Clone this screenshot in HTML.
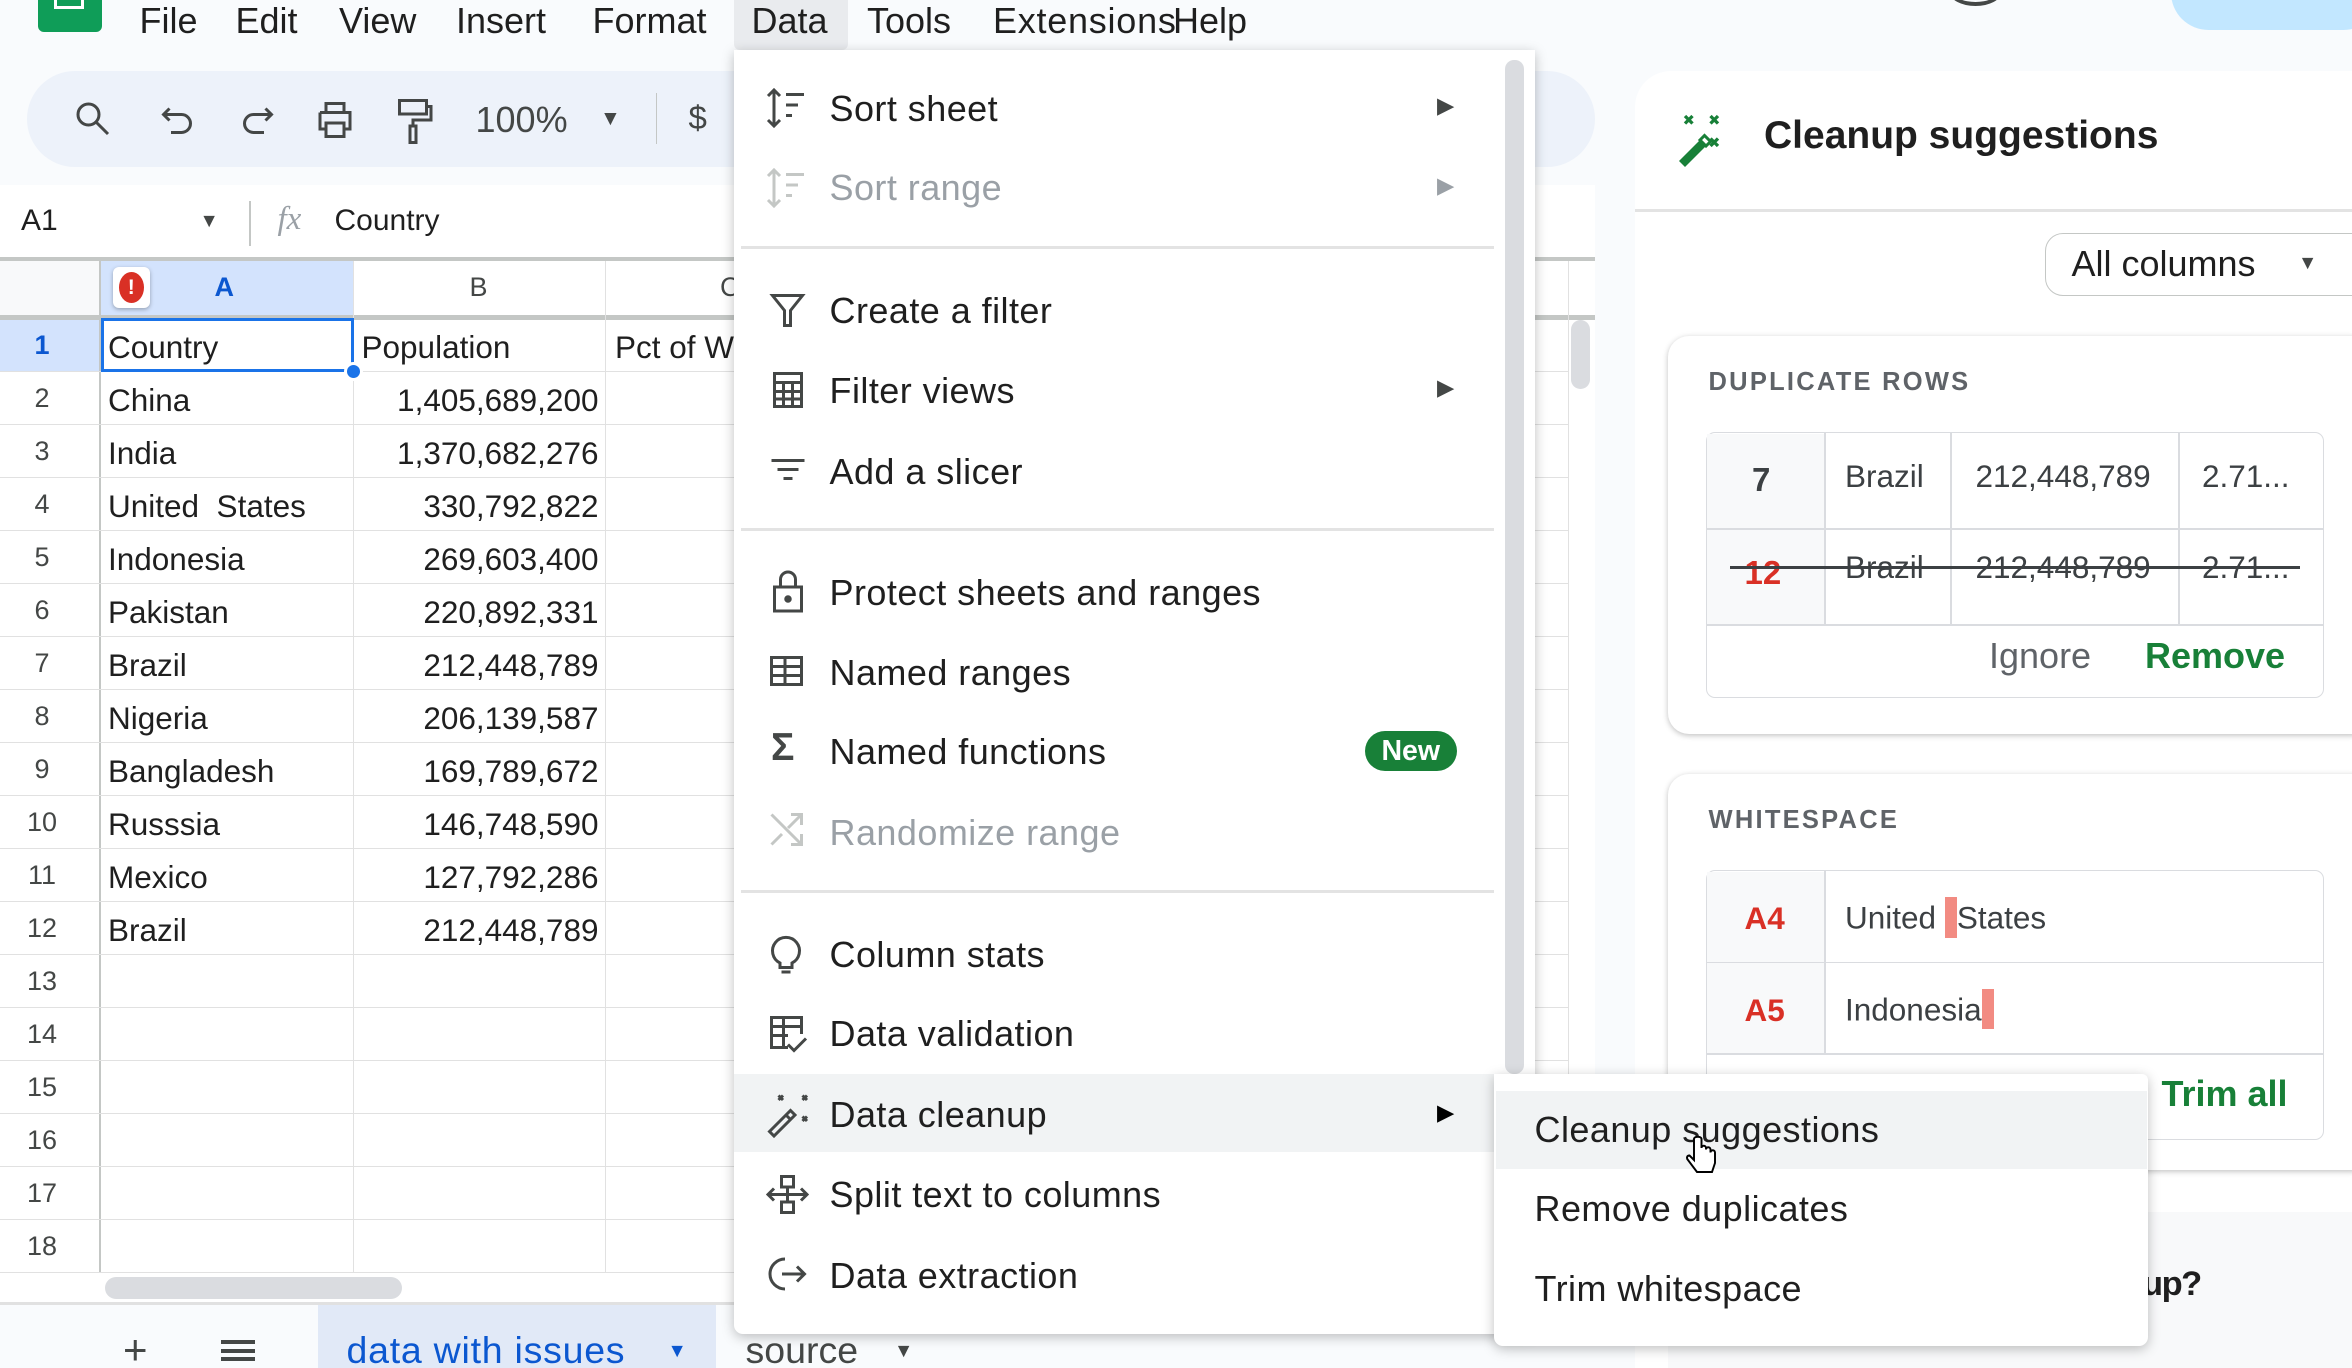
<!DOCTYPE html>
<html><head><meta charset="utf-8"><style>
*{box-sizing:border-box;margin:0;padding:0}
html,body{width:2352px;height:1368px;overflow:hidden;background:#f9fbfd}
#w{zoom:1.5;width:1568px;height:912px;position:relative;font-family:"Liberation Sans",Arial,sans-serif;color:#1f1f1f;background:#f9fbfd;overflow:hidden}
.a{position:absolute}
.mi{position:absolute;top:0;font-size:24px;line-height:28px}
.ic{position:absolute;stroke:#444746;fill:none;stroke-width:2}
.cell{position:absolute;font-size:21px;line-height:35px;white-space:nowrap}
.rn{position:absolute;left:0;width:56px;text-align:center;font-size:18px;color:#444746}
.m{position:absolute;left:553px;font-size:24px;letter-spacing:.3px;line-height:30px;color:#1f1f1f;white-space:nowrap}
.dis{color:#9aa0a6}
.arr{position:absolute;left:958px;font-size:15px;color:#444746}
.sm{position:absolute;left:1023px;font-size:24px;letter-spacing:.3px;color:#1f1f1f;white-space:nowrap}
.hd{font-size:17px;font-weight:bold;letter-spacing:1.5px;color:#5f6368}
.tc{position:absolute;font-size:21px;color:#3c4043;white-space:nowrap}
</style></head><body><div id="w">

<div class="a" style="left:25px;top:-10px;width:43px;height:31px;background:#0f9d58;border-radius:4px"></div>
<div class="a" style="left:36px;top:-4px;width:20px;height:10px;border:2px solid #fff;border-top:none"></div>
<div class="a" style="left:489px;top:0;width:76px;height:33px;background:#e9ebee;border-radius:0 0 4px 4px"></div>
<div class="mi" style="left:93px">File</div><div class="mi" style="left:157px">Edit</div><div class="mi" style="left:226px">View</div><div class="mi" style="left:304px">Insert</div><div class="mi" style="left:395px">Format</div><div class="mi" style="left:501px">Data</div><div class="mi" style="left:578px">Tools</div><div class="mi" style="left:662px;letter-spacing:.5px">Extensions</div><div class="mi" style="left:782px">Help</div>
<div class="a" style="left:1300px;top:-14px;width:34px;height:18px;border:3px solid #444746;border-radius:50%"></div>
<div class="a" style="left:1447px;top:-30px;width:140px;height:50px;background:#c2e7ff;border-radius:25px"></div>

<div class="a" style="left:18px;top:47px;width:1045px;height:64px;background:#edf2fa;border-radius:32px"></div>
<svg class="ic" style="left:48px;top:65px" width="28" height="28" viewBox="0 0 28 28"><circle cx="11" cy="11" r="7"/><path d="M16 16l8 8"/></svg>
<svg class="ic" style="left:106px;top:67px" width="26" height="26" viewBox="0 0 26 26"><path d="M7 5L3 9l4 4M3 9h12a6 6 0 010 12H8"/></svg>
<svg class="ic" style="left:158px;top:67px" width="26" height="26" viewBox="0 0 26 26"><path d="M19 5l4 4-4 4M23 9H11a6 6 0 000 12h7"/></svg>
<svg class="ic" style="left:209px;top:66px" width="28" height="28" viewBox="0 0 28 28"><path d="M8 9V3h12v6M4 9h20v11h-4M8 20H4V9M8 16h12v9H8z"/></svg>
<svg class="ic" style="left:263px;top:64px" width="26" height="32" viewBox="0 0 26 32"><path d="M3 3h18v9H3zM21 7h3v9H12v4M10 20h4v11h-4z"/></svg>
<div class="a" style="left:317px;top:66px;font-size:24px;color:#444746">100%</div>
<div class="a" style="left:400px;top:71px;font-size:14px;color:#444746">▼</div>
<div class="a" style="left:437px;top:62px;width:1px;height:34px;background:#c4c7c5"></div>
<div class="a" style="left:459px;top:66px;font-size:22px;color:#444746">$</div>

<div class="a" style="left:0;top:123px;width:1063px;height:48px;background:#fff"></div>
<div class="a" style="left:14px;top:136px;font-size:20px">A1</div>
<div class="a" style="left:133px;top:140px;font-size:13px;color:#444746">▼</div>
<div class="a" style="left:166px;top:134px;width:1px;height:30px;background:#c4c7c5"></div>
<div class="a" style="left:185px;top:134px;font-size:22px;font-style:italic;font-family:'Liberation Serif',serif;color:#9aa0a6">fx</div>
<div class="a" style="left:223px;top:136px;font-size:20px">Country</div>

<div class="a" style="left:0;top:171px;width:1063px;height:697px;background:#fff"></div>
<div class="a" style="left:0;top:171px;width:1063px;height:3px;background:#c4c7c5"></div>
<div class="a" style="left:0;top:174px;width:66px;height:37px;background:#f8f9fa"></div>
<div class="a" style="left:67px;top:174px;width:168px;height:37px;background:#d3e3fd"></div>
<div class="a" style="left:0;top:212px;width:66px;height:36px;background:#d3e3fd"></div>
<div class="a" style="left:0;top:210px;width:1063px;height:3px;background:#c4c7c5"></div>
<div class="a" style="left:66px;top:174px;width:1px;height:674px;background:#c4c7c5"></div>
<div class="a" style="left:235px;top:174px;width:1px;height:674px;background:#e1e1e1"></div>
<div class="a" style="left:403px;top:174px;width:1px;height:674px;background:#e1e1e1"></div>
<div class="a" style="left:1045px;top:174px;width:1px;height:674px;background:#e1e1e1"></div>
<div class="a" style="left:1047px;top:213px;width:13px;height:46px;background:#dadce0;border-radius:7px"></div>
<div class="a" style="left:75px;top:178px;width:25px;height:27px;background:#fff;border-radius:4px;box-shadow:0 1px 3px rgba(0,0,0,.3)"></div>
<div class="a" style="left:79px;top:181px;width:17px;height:21px;background:#d93025;border-radius:50%;color:#fff;font-size:14px;font-weight:bold;text-align:center;line-height:21px">!</div>
<div class="a" style="left:143px;top:181px;font-size:18px;font-weight:bold;color:#0b57d0">A</div>
<div class="a" style="left:313px;top:181px;font-size:18px;color:#444746">B</div>
<div class="a" style="left:480px;top:181px;font-size:18px;color:#444746">C</div>

<div id="rows"></div>
<script>
var d=[["Country","Population"],["China","1,405,689,200"],["India","1,370,682,276"],["United  States","330,792,822"],["Indonesia","269,603,400"],["Pakistan","220,892,331"],["Brazil","212,448,789"],["Nigeria","206,139,587"],["Bangladesh","169,789,672"],["Russsia","146,748,590"],["Mexico","127,792,286"],["Brazil","212,448,789"]];
var h="";for(var i=0;i<18;i++){var t=212+i*35.35;
h+='<div class="a" style="left:0;top:'+(t+35)+'px;width:1045px;height:1px;background:#e1e1e1"></div>';
h+='<div class="rn" style="top:'+(t+8)+'px;'+(i==0?'color:#0b57d0;font-weight:bold':'')+'">'+(i+1)+'</div>';
if(d[i]){h+='<div class="cell" style="left:72px;top:'+(t+2)+'px">'+d[i][0].replace("  ","&nbsp; ")+'</div>';
h+='<div class="cell" style="'+(i==0?'left:241px':'right:'+(1568-399)+'px')+';top:'+(t+2)+'px">'+d[i][1]+'</div>';}
}
h+='<div class="cell" style="left:410px;top:214px">Pct of W</div>';
document.getElementById("rows").outerHTML=h;
</script>
<div class="a" style="left:67px;top:212px;width:169px;height:36px;border:2px solid #1a73e8"></div>
<div class="a" style="left:229px;top:241px;width:13px;height:13px;background:#1a73e8;border:2px solid #fff;border-radius:50%"></div>
<div class="a" style="left:0;top:848px;width:1063px;height:20px;background:#fff;border-top:1px solid #e1e1e1"></div>
<div class="a" style="left:70px;top:851px;width:198px;height:15px;background:#dadce0;border-radius:8px"></div>

<div class="a" style="left:0;top:868px;width:1090px;height:44px;background:#f9fbfd;border-top:2px solid #e1e1e1"></div>
<div class="a" style="left:82px;top:884px;font-size:28px;color:#444746">+</div>
<div class="a" style="left:147px;top:893px;width:23px;height:14px;border-top:3px solid #444746;border-bottom:3px solid #444746"></div>
<div class="a" style="left:147px;top:899px;width:23px;height:3px;background:#444746"></div>
<div class="a" style="left:212px;top:870px;width:265px;height:42px;background:#e1e9f7"></div>
<div class="a" style="left:231px;top:886px;font-size:25px;letter-spacing:.5px;color:#0b57d0">data with issues</div>
<div class="a" style="left:445px;top:893px;font-size:13px;color:#0b57d0">▼</div>
<div class="a" style="left:497px;top:886px;font-size:25px;color:#444746">source</div>
<div class="a" style="left:596px;top:893px;font-size:13px;color:#444746">▼</div>

<div class="a" style="left:1090px;top:47px;width:500px;height:880px;background:#fff;border-radius:24px 0 0 0"></div>
<svg class="a" style="left:1115px;top:73px" width="40" height="40" viewBox="0 0 40 40"><path d="M4 34l14-14 4 4-14 14z" fill="#188038"/><path d="M18 20l3-3 4 4-3 3z" fill="none" stroke="#188038" stroke-width="2"/><g stroke="#188038" stroke-width="2.2"><path d="M8 4l5 5M13 4l-5 5M25 4l5 5M30 4l-5 5M25 19l5 5M30 19l-5 5"/></g></svg>
<div class="a" style="left:1176px;top:76px;font-size:26px;font-weight:bold;color:#1f1f1f">Cleanup suggestions</div>
<div class="a" style="left:1090px;top:139px;width:480px;height:2px;background:#e3e3e3"></div>
<div class="a" style="left:1363px;top:155px;width:220px;height:42px;border:1px solid #c4c7c5;border-radius:12px"></div>
<div class="a" style="left:1381px;top:162px;font-size:24px">All columns</div>
<div class="a" style="left:1532px;top:168px;font-size:13px;color:#444746">▼</div>

<div class="a" style="left:1112px;top:224px;width:470px;height:265px;background:#fff;border-radius:14px;box-shadow:0 1px 4px rgba(0,0,0,.25)"></div>
<div class="a hd" style="left:1139px;top:245px">DUPLICATE ROWS</div>
<div class="a" style="left:1137px;top:288px;width:412px;height:177px;border:1px solid #dadce0;border-radius:6px"></div>
<div class="a" style="left:1138px;top:289px;width:78px;height:127px;background:#f8f9fa"></div>
<div class="a" style="left:1137px;top:352px;width:412px;height:1px;background:#dadce0"></div>
<div class="a" style="left:1137px;top:416px;width:412px;height:1px;background:#dadce0"></div>
<div class="a" style="left:1216px;top:288px;width:1px;height:128px;background:#dadce0"></div>
<div class="a" style="left:1300px;top:288px;width:1px;height:128px;background:#dadce0"></div>
<div class="a" style="left:1452px;top:288px;width:1px;height:128px;background:#dadce0"></div>
<div class="tc" style="left:1168px;top:307px;color:#3c4043;font-size:22px;font-weight:bold">7</div>
<div class="tc" style="left:1230px;top:305px">Brazil</div><div class="tc" style="left:1317px;top:305px">212,448,789</div><div class="tc" style="left:1468px;top:305px">2.71...</div>
<div class="tc" style="left:1163px;top:369px;color:#d93025;font-weight:bold;font-size:22px">12</div>
<div class="tc" style="left:1230px;top:366px">Brazil</div><div class="tc" style="left:1317px;top:366px">212,448,789</div><div class="tc" style="left:1468px;top:366px">2.71...</div>
<div class="a" style="left:1153px;top:377px;width:380px;height:2px;background:#3c4043"></div>
<div class="a" style="left:1326px;top:423px;font-size:24px;color:#5f6368">Ignore</div>
<div class="a" style="left:1430px;top:423px;font-size:24px;font-weight:bold;color:#188038">Remove</div>

<div class="a" style="left:1112px;top:516px;width:470px;height:264px;background:#fff;border-radius:14px;box-shadow:0 1px 4px rgba(0,0,0,.25)"></div>
<div class="a hd" style="left:1139px;top:537px">WHITESPACE</div>
<div class="a" style="left:1137px;top:580px;width:412px;height:180px;border:1px solid #dadce0;border-radius:6px"></div>
<div class="a" style="left:1138px;top:581px;width:78px;height:121px;background:#f8f9fa"></div>
<div class="a" style="left:1216px;top:580px;width:1px;height:122px;background:#dadce0"></div>
<div class="a" style="left:1137px;top:641px;width:412px;height:1px;background:#dadce0"></div>
<div class="a" style="left:1137px;top:702px;width:412px;height:1px;background:#dadce0"></div>
<div class="tc" style="left:1163px;top:600px;color:#d93025;font-weight:bold">A4</div>
<div class="tc" style="left:1163px;top:661px;color:#d93025;font-weight:bold">A5</div>
<div class="tc" style="left:1230px;top:598px">United <span style="display:inline-block;width:8px;height:27px;background:#f28b82;vertical-align:-6px"></span>States</div>
<div class="tc" style="left:1230px;top:659px">Indonesia<span style="display:inline-block;width:8px;height:27px;background:#f28b82;vertical-align:-6px"></span></div>
<div class="a" style="left:1441px;top:715px;font-size:24px;font-weight:bold;color:#188038">Trim all</div>
<div class="a" style="left:1112px;top:808px;width:470px;height:120px;background:#f8f9fa;border-radius:14px;border-bottom:1px solid #e1e1e1"></div>
<div class="a" style="left:1428px;top:843px;font-size:23px;font-weight:bold;color:#1f1f1f;letter-spacing:-1px">up?</div>

<div class="a" style="left:489px;top:33px;width:534px;height:856px;background:#fff;border-radius:0 0 6px 6px;box-shadow:0 2px 8px rgba(0,0,0,.25)"></div>
<div class="a" style="left:1003px;top:40px;width:13px;height:676px;background:#dadce0;border-radius:6px"></div>
<div class="a" style="left:489px;top:716px;width:507px;height:52px;background:#f1f3f4"></div>
<div class="a" style="left:494px;top:164px;width:502px;height:2px;background:#e3e3e3"></div>
<div class="a" style="left:494px;top:352px;width:502px;height:2px;background:#e3e3e3"></div>
<div class="a" style="left:494px;top:593px;width:502px;height:2px;background:#e3e3e3"></div>

<svg class="ic" style="left:510px;top:58px" width="30" height="28" viewBox="0 0 30 28"><path d="M6 2v24M2 6l4-4 4 4M2 22l4 4 4-4M14 5h12M14 12h8M14 19h4"/></svg>
<svg class="ic" style="left:510px;top:111px;stroke:#c4c7c5" width="30" height="28" viewBox="0 0 30 28"><path d="M6 2v24M2 6l4-4 4 4M2 22l4 4 4-4M14 5h12M14 12h8M14 19h4"/></svg>
<svg class="ic" style="left:512px;top:194px" width="26" height="26" viewBox="0 0 26 26"><path d="M3 3h20l-8 10v10h-4V13z"/></svg>
<svg class="ic" style="left:511px;top:246px" width="28" height="28" viewBox="0 0 28 28"><path d="M5 3h18v22H5zM5 9h18M5 15h18M5 20h18M11 9v16M17 9v16"/></svg>
<svg class="ic" style="left:511px;top:300px" width="28" height="26" viewBox="0 0 28 26"><path d="M3 7h22M7 13h14M11 19h6"/></svg>
<svg class="ic" style="left:513px;top:379px" width="24" height="30" viewBox="0 0 24 30"><path d="M3 12h18v16H3zM7 12V7a5 5 0 0110 0v5"/><circle cx="12" cy="20" r="1.5" fill="#444746"/></svg>
<svg class="ic" style="left:511px;top:435px" width="26" height="24" viewBox="0 0 26 24"><path d="M3 3h20v18H3zM3 9h20M3 15h20M12 3v18"/></svg>
<div class="a" style="left:514px;top:484px;font-size:26px;font-weight:bold;color:#444746">Σ</div>
<svg class="ic" style="left:511px;top:540px;stroke:#c4c7c5" width="26" height="26" viewBox="0 0 26 26"><path d="M3 3l20 20M16 3h7v7M23 3L14 12M10 16l-7 7M16 23h7v-7"/></svg>
<svg class="ic" style="left:512px;top:620px" width="24" height="30" viewBox="0 0 24 30"><path d="M8 22a9 9 0 118 0v3H8zM9 28h6"/></svg>
<svg class="ic" style="left:511px;top:675px" width="28" height="28" viewBox="0 0 28 28"><path d="M14 23H3V3h20v11M3 9h20M3 15h11M11 3v20M14 21l4 4 8-8"/></svg>
<svg class="ic" style="left:510px;top:727px" width="32" height="32" viewBox="0 0 32 32"><path d="M3 27l14-14 3 3-14 14zM14 16l3 3"/><path d="M9 3l3 3M12 3l-3 3M25 3l3 3M28 3l-3 3M25 17l3 3M28 17l-3 3"/></svg>
<svg class="ic" style="left:510px;top:781px" width="30" height="30" viewBox="0 0 30 30"><path d="M11 3h8v7h-8zM11 20h8v7h-8zM15 10v10M2 15h26M6 11l-4 4 4 4M24 11l4 4-4 4"/></svg>
<svg class="ic" style="left:511px;top:835px" width="28" height="28" viewBox="0 0 28 28"><path d="M12 4a10 10 0 000 20M10 14h15M20 9l5 5-5 5"/></svg>

<div class="m" style="top:57px">Sort sheet</div><div class="arr" style="top:62px">▶</div>
<div class="m dis" style="top:110px">Sort range</div><div class="arr" style="top:115px;color:#9aa0a6">▶</div>
<div class="m" style="top:192px">Create a filter</div>
<div class="m" style="top:245px">Filter views</div><div class="arr" style="top:250px">▶</div>
<div class="m" style="top:299px">Add a slicer</div>
<div class="m" style="top:380px">Protect sheets and ranges</div>
<div class="m" style="top:433px">Named ranges</div>
<div class="m" style="top:486px">Named functions</div>
<div class="a" style="left:910px;top:487px;width:61px;height:27px;background:#188038;border-radius:14px;color:#fff;font-size:19px;font-weight:bold;text-align:center;line-height:27px">New</div>
<div class="m dis" style="top:540px">Randomize range</div>
<div class="m" style="top:621px">Column stats</div>
<div class="m" style="top:674px">Data validation</div>
<div class="m" style="top:728px">Data cleanup</div><div class="arr" style="top:733px;color:#000">▶</div>
<div class="m" style="top:781px">Split text to columns</div>
<div class="m" style="top:835px">Data extraction</div>

<div class="a" style="left:996px;top:716px;width:436px;height:181px;background:#fff;border-radius:0 4px 6px 6px;box-shadow:0 2px 8px rgba(0,0,0,.25)"></div>
<div class="a" style="left:997px;top:727px;width:434px;height:52px;background:#f1f3f4"></div>
<div class="sm" style="top:739px">Cleanup suggestions</div>
<div class="sm" style="top:792px">Remove duplicates</div>
<div class="sm" style="top:845px">Trim whitespace</div>
<svg class="a" style="left:1123px;top:757px" width="22" height="28" viewBox="0 0 22 28"><path d="M6 2v14l-3-3c-2 0-2 2-1 3l6 8h10l2-6v-7c0-2-3-2-3 0v-2c0-2-3-2-3 0v-1c0-2-3-2-3 0V2c0-2-5-2-5 0z" fill="#fff" stroke="#000" stroke-width="1.3"/></svg>
</div></body></html>
